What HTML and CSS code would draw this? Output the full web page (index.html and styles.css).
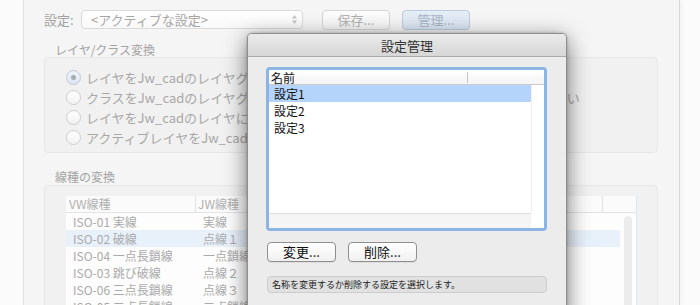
FILE: index.html
```html
<!DOCTYPE html>
<html lang="ja">
<head>
    <meta charset="UTF-8">
    <title>設定管理</title>
    <link rel="stylesheet" href="styles.css">
</head>
<body>
    <div class="desk">
        <div class="window">
            <div class="toolbar">
                <span class="field-label">設定:</span>
                <div class="popup">
                    <span>&lt;アクティブな設定&gt;</span>
                    <span class="popup-arrows">
                        <svg width="7" height="11" viewBox="0 0 7 11"><path d="M3.5 1 L6 4.5 L1 4.5 Z M3.5 10 L6 6.5 L1 6.5 Z" fill="#c4c4c4"/></svg>
                    </span>
                </div>
                <button class="bg-btn">保存...</button>
                <button class="bg-btn default">管理...</button>
            </div>

            <div class="group-title">レイヤ/クラス変換</div>
            <div class="group radios">
                <div class="radio-row"><span class="radio on"></span><span class="clip">レイヤをJw_cadのレイヤグループに変換する</span></div>
                <div class="radio-row"><span class="radio"></span>クラスをJw_cadのレイヤグループに変換し、レイヤはJw_cadのレイヤに変換しない</div>
                <div class="radio-row"><span class="radio"></span><span class="clip">レイヤをJw_cadのレイヤに変換する</span></div>
                <div class="radio-row"><span class="radio"></span><span class="clip">アクティブレイヤをJw_cadに変換する</span></div>
            </div>

            <div class="group-title second">線種の変換</div>
            <div class="group lines">
                <div class="bg-table">
                    <div class="bg-head">
                        <span class="col-a">VW線種</span>
                        <span class="col-b">JW線種</span>
                        <span class="col-c"></span>
                    </div>
                    <div class="bg-body">
                        <div class="bg-rows">
                            <div class="bg-row"><span class="col-a">ISO-01 実線</span><span class="col-b">実線</span></div>
                            <div class="bg-row picked"><span class="col-a">ISO-02 破線</span><span class="col-b">点線１</span></div>
                            <div class="bg-row"><span class="col-a">ISO-04 一点長鎖線</span><span class="col-b">一点鎖線</span></div>
                            <div class="bg-row"><span class="col-a">ISO-03 跳び破線</span><span class="col-b">点線２</span></div>
                            <div class="bg-row"><span class="col-a">ISO-06 三点長鎖線</span><span class="col-b">点線３</span></div>
                            <div class="bg-row"><span class="col-a">ISO-05 二点長鎖線</span><span class="col-b">二点鎖線</span></div>
                        </div>
                        <div class="bg-scroller"><div class="track"></div></div>
                    </div>
                </div>
            </div>
        </div>
    </div>

    <!-- 設定管理ダイアログ -->
    <div class="dialog">
        <div class="dialog-title">設定管理</div>
        <div class="dialog-body">
            <div class="list-ring">
                <div class="list">
                    <div class="list-head">
                        <span class="head-cell">名前</span>
                        <span class="head-rest"></span>
                    </div>
                    <div class="list-main">
                        <div class="list-rows">
                            <div class="list-row selected">設定1</div>
                            <div class="list-row">設定2</div>
                            <div class="list-row">設定3</div>
                        </div>
                        <div class="list-vscroll"></div>
                    </div>
                    <div class="list-foot">
                        <div class="list-hscroll"></div>
                        <div class="list-corner"></div>
                    </div>
                </div>
            </div>

            <div class="actions">
                <button class="btn">変更...</button>
                <button class="btn">削除...</button>
            </div>

            <div class="status">名称を変更するか削除する設定を選択します。</div>
        </div>
    </div>
</body>
</html>
```

FILE: styles.css
```css
* {
    margin: 0;
    padding: 0;
    box-sizing: border-box;
}

body {
    font-family: "Noto Sans CJK JP", "Noto Sans", sans-serif;
    background: #fbfbfb;
    width: 700px;
    height: 305px;
    overflow: hidden;
    position: relative;
}

button {
    font-family: inherit;
}

/* 背面のウィンドウ */
.desk {
    padding-left: 23px;
    height: 305px;
    overflow: hidden;
}

.window {
    width: 657px;
    height: 305px;
    background: #f5f5f5;
    border-left: 1px solid #e2e2e2;
    border-right: 1px solid #d8d8d8;
    box-shadow: 2px 0 4px rgba(0, 0, 0, 0.04);
    padding-left: 20px;
    color: #a6a6a6;
    overflow: hidden;
}

.toolbar {
    display: flex;
    align-items: center;
    padding-top: 10px;
    height: 29px;
}

.field-label {
    width: 37px;
    font-size: 13px;
    line-height: 19px;
    color: #a3a3a3;
}

.popup {
    width: 222px;
    height: 19px;
    display: flex;
    align-items: center;
    justify-content: space-between;
    padding: 0 4px 0 9px;
    font-size: 13px;
    color: #a6a6a6;
    background: linear-gradient(#ffffff, #f8f8f8);
    border: 1px solid #dadada;
    border-radius: 4px;
}

.popup-arrows {
    display: flex;
    align-items: center;
}

.bg-btn {
    width: 68px;
    height: 20px;
    margin-left: 19px;
    font-size: 13px;
    line-height: 18px;
    color: #b2b2b2;
    background: linear-gradient(#fdfdfd, #f3f3f3);
    border: 1px solid #d6d6d6;
    border-radius: 4px;
}

.bg-btn.default {
    margin-left: 12px;
    color: #a9b6c6;
    background: linear-gradient(#e6eef7, #d8e3f0);
    border-color: #bccadb;
}

.group-title {
    margin: 14px 0 0 11px;
    height: 14px;
    font-size: 12px;
    line-height: 14px;
    color: #a3a3a3;
}

.group-title.second {
    margin-top: 17px;
}

.group {
    width: 614px;
    background: #f1f1f1;
    border: 1px solid #e7e7e7;
    border-radius: 4px;
}

.radios {
    height: 96px;
    padding: 9px 0 0 21px;
}

.radio-row {
    display: flex;
    align-items: center;
    height: 20px;
    font-size: 13px;
    white-space: nowrap;
    color: #a8a8a8;
}

/* ダイアログの下に隠れる部分は切り詰める */
.clip {
    max-width: 172px;
    overflow: hidden;
}

.radio {
    width: 15px;
    height: 15px;
    margin-right: 5px;
    border-radius: 50%;
    border: 1px solid #cdcdcd;
    background: linear-gradient(#ffffff, #f2f2f2);
    display: flex;
    align-items: center;
    justify-content: center;
    flex-shrink: 0;
}

.radio.on {
    background: linear-gradient(#eef3f9, #dde7f2);
    border-color: #bfcad8;
}

.radio.on::after {
    content: "";
    width: 5px;
    height: 5px;
    border-radius: 50%;
    background: #a4acb6;
}

.lines {
    margin-top: 1px;
    height: 140px;
    padding: 10px 0 0 21px;
}

.bg-table {
    width: 571px;
    height: 130px;
    background: #fdfdfd;
    border-right: 1px solid #d9e5f3;
}

.bg-head {
    display: flex;
    height: 17px;
    font-size: 12px;
    line-height: 16px;
    color: #b0b0b0;
    background: #fbfbfb;
    border-bottom: 1px solid #e4e4e4;
}

.bg-head .col-a {
    width: 130px;
    padding-left: 3px;
    border-right: 1px solid #e2e2e2;
}

.bg-head .col-b {
    width: 407px;
    padding-left: 2px;
    border-right: 1px solid #e2e2e2;
}

.bg-body {
    display: flex;
}

.bg-rows {
    width: 555px;
}

.bg-row {
    display: flex;
    height: 17px;
    font-size: 12px;
    line-height: 17px;
    color: #aaaaaa;
    white-space: nowrap;
}

.bg-row.picked {
    background: #e8f0fa;
}

.bg-row .col-a {
    width: 130px;
    padding-left: 7px;
}

.bg-row .col-b {
    padding-left: 7px;
}

.bg-scroller {
    width: 16px;
    padding: 3px 4px 0 0;
    display: flex;
    justify-content: flex-end;
}

.bg-scroller .track {
    width: 8px;
    height: 120px;
    border-radius: 4px;
    background: #ececec;
}

/* 設定管理ダイアログ */
.dialog {
    position: absolute;
    left: 247px;
    top: 33px;
    width: 320px;
    height: 290px;
    background: #ececec;
    border: 1px solid #8e8e8e;
    border-radius: 5px 5px 0 0;
    box-shadow: 0 6px 22px rgba(0, 0, 0, 0.55), 0 0 3px rgba(0, 0, 0, 0.25);
}

.dialog-title {
    height: 23px;
    font-size: 13px;
    line-height: 23px;
    text-align: center;
    color: #333;
    background: linear-gradient(#ebebeb, #d6d6d6);
    border-bottom: 1px solid #a9a9a9;
    border-radius: 4px 4px 0 0;
}

.dialog-body {
    padding: 10px 0 0 19px;
}

.list-ring {
    width: 281px;
    height: 164px;
    margin-left: -1px;
    border: 3px solid #8cb5e6;
    border-radius: 4px;
    background: #fff;
}

.list {
    height: 158px;
    display: flex;
    flex-direction: column;
}

.list-head {
    display: flex;
    align-items: center;
    height: 15px;
    font-size: 12px;
    color: #111;
    background: linear-gradient(#ffffff, #f4f4f4);
    border-bottom: 1px solid #cbcbcb;
}

.head-cell {
    width: 199px;
    padding-left: 2px;
    line-height: 11px;
    border-right: 1px solid #c4c4c4;
}

.list-main {
    display: flex;
    flex: 1;
}

.list-rows {
    width: 262px;
}

.list-row {
    height: 17px;
    padding-left: 5px;
    font-size: 12px;
    line-height: 17px;
    color: #111;
}

.list-row.selected {
    background: #b4d4fb;
}

.list-vscroll {
    flex: 1;
    border-left: 1px solid #f0f0f0;
}

.list-foot {
    display: flex;
    height: 15px;
}

.list-hscroll {
    width: 262px;
    background: #f5f5f5;
    border-top: 1px solid #dedede;
}

.list-corner {
    flex: 1;
    background: #fff;
}

.actions {
    display: flex;
    gap: 12px;
    margin-top: 11px;
}

.btn {
    width: 69px;
    height: 20px;
    font-size: 13px;
    line-height: 18px;
    color: #111;
    background: linear-gradient(#ffffff, #f1f1f1);
    border: 1px solid #8f8f8f;
    border-radius: 4px;
    box-shadow: 0 1px 0 rgba(0, 0, 0, 0.06);
}

.status {
    width: 280px;
    height: 17px;
    margin-top: 14px;
    padding-left: 4px;
    font-size: 9px;
    line-height: 15px;
    color: #222;
    background: #e1e1e1;
    border: 1px solid #cdcdcd;
    border-radius: 4px;
}
```
